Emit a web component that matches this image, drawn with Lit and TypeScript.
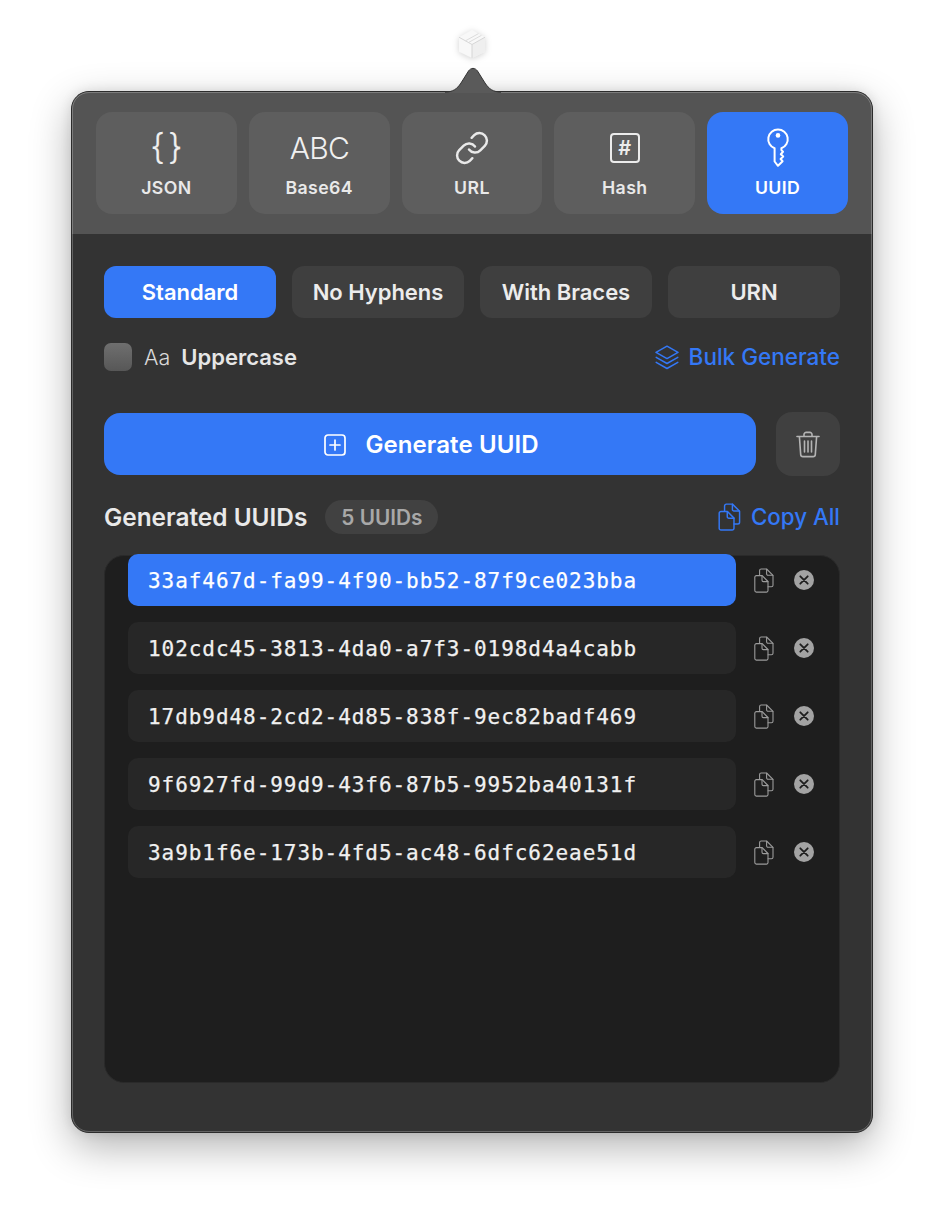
import { LitElement, html, css, svg } from "lit";
import { customElement } from "lit/decorators.js";

const docs = svg`
  <path d="M2.4 7.600h5.800l5.800 5.900v9a1.600 1.600 0 0 1-1.600 1.600H2.400A1.600 1.600 0 0 1 .8 22.500V9.200a1.600 1.600 0 0 1 1.600-1.600z"/>
  <path d="M8 7.800v4.400a1.400 1.400 0 0 0 1.400 1.400H14"/>
  <path d="M5.600 7.400V2.600A1.600 1.600 0 0 1 7.200 1h5.400l6.400 6.300v9.900a1.600 1.600 0 0 1-1.600 1.600h-3.300"/>
  <path d="M12.600 1.200v4.600A1.400 1.400 0 0 0 14 7.200h4.800"/>`;

const tabIcons: Record<string, unknown> = {
  JSON: html`<span class="glyph braces">{}</span>`,
  Base64: html`<span class="glyph abc">ABC</span>`,
  URL: html`<svg class="ic" width="36" height="36" viewBox="0 0 24 24" stroke-width="1.650"><path d="M10 13a5 5 0 0 0 7.540.54l3-3a5 5 0 0 0-7.070-7.070l-1.720 1.710"/><path d="M14 11a5 5 0 0 0-7.540-.54l-3 3a5 5 0 0 0 7.070 7.070l1.710-1.710"/></svg>`,
  Hash: html`<span class="hashbox">#</span>`,
  UUID: html`<svg class="ic" width="24" height="40" viewBox="0 0 24 40" stroke-width="2"><path d="M12 1.500a9.700 9.700 0 0 0-3.400 18.800v13.200L12 37.800l4.600-4.600-2-2.200 2.600-2.500-2.400-2.300 2.200-2.400-1.600-1.700v-1.800A9.700 9.700 0 0 0 12 1.500z"/><circle cx="12" cy="7.400" r="2.300" fill="currentColor" stroke="none"/></svg>`,
};

const tabs = ["JSON", "Base64", "URL", "Hash", "UUID"];
const formats = ["Standard", "No Hyphens", "With Braces", "URN"];
const uuids = [
  "33af467d-fa99-4f90-bb52-87f9ce023bba",
  "102cdc45-3813-4da0-a7f3-0198d4a4cabb",
  "17db9d48-2cd2-4d85-838f-9ec82badf469",
  "9f6927fd-99d9-43f6-87b5-9952ba40131f",
  "3a9b1f6e-173b-4fd5-ac48-6dfc62eae51d",
];

@customElement("app-root")
export class AppRoot extends LitElement {
  static styles = css`
    :host {
      display: block;
      height: 1212px;
      background: #fff;
      font-family: Inter, "Liberation Sans", sans-serif;
      color: #e9e9e9;
      overflow: hidden;
    }
    * { box-sizing: border-box; }
    .ic { fill: none; stroke: currentColor; stroke-linecap: round; stroke-linejoin: round; display: block; }
    .top { display: flex; justify-content: center; padding-top: 29px; height: 91px; }
    .cube { filter: drop-shadow(0 1px 3px rgba(0,0,0,.18)); display: block; }
    .window {
      position: relative;
      width: 802px;
      margin: 0 auto;
      border: 1px solid #2c2c2c;
      border-radius: 18px;
      background: #333;
      box-shadow: 0 14px 40px rgba(0,0,0,.3), 0 0 12px rgba(0,0,0,.1);
    }
    .window::after {
      content: "";
      position: absolute;
      inset: 0;
      border: 1px solid rgba(255,255,255,.24);
      border-radius: 17px;
      pointer-events: none;
    }
    .arrow { position: absolute; left: 373px; top: -25px; display: block; z-index: 2; }
    .header {
      display: grid;
      grid-template-columns: repeat(5, 1fr);
      gap: 12px;
      padding: 20px 24px;
      background: #545454;
      border-radius: 17px 17px 0 0;
    }
    .tab {
      height: 102px;
      border-radius: 16px;
      background: #5e5e5e;
      display: flex;
      flex-direction: column;
      align-items: center;
      color: #e9e9e9;
    }
    .tab.on { background: #3478f6; color: #fff; }
    .tab .icon { height: 64px; display: flex; align-items: center; justify-content: center; padding-top: 8px; }
    .tab .label { font-size: 17.700px; font-weight: 600; line-height: 20px; margin-top: 2px; letter-spacing: .4px; }
    .glyph { line-height: 1; color: #f0f0f0; }
    .braces { font-size: 35px; font-weight: 300; letter-spacing: 3px; margin-top: -3px; margin-right: -3px; -webkit-text-stroke: .2px #f0f0f0; }
    .abc { font-size: 30px; font-weight: 300; letter-spacing: -.7px; margin-right: -.7px; }
    .hashbox {
      width: 30px; height: 30px;
      border: 2px solid #ececec;
      border-radius: 4px;
      display: flex; align-items: center; justify-content: center;
      font-size: 20px; font-weight: 600; color: #ececec; line-height: 1;
    }
    .body { padding: 32px 32px 49px; }
    .segs { display: grid; grid-template-columns: repeat(4, 1fr); gap: 16px; }
    .seg {
      height: 52px; border-radius: 12px; background: #3f3f3f;
      display: flex; align-items: center; justify-content: center;
      font-size: 22px; font-weight: 600; color: #ececec; letter-spacing: -.02px;
    }
    .seg.on { background: #3478f6; color: #fff; }
    .opts { display: flex; align-items: center; justify-content: space-between; margin-top: 25px; height: 28px; }
    .check { display: flex; align-items: center; }
    .box { width: 28px; height: 28px; border-radius: 7px; background: linear-gradient(#6f6f6f, #575757); }
    .aa { font-size: 21.500px; font-weight: 300; color: #d8d8d8; margin-left: 12px; }
    .upper { font-size: 22px; font-weight: 600; margin-left: 11px; color: #e6e6e6; }
    .link { display: flex; align-items: center; gap: 10px; color: #3478f6; font-size: 22.500px; font-weight: 500; line-height: 28px; }
    .actions { display: flex; align-items: center; gap: 20px; margin-top: 41px; }
    .gen {
      flex: 1; height: 62px; border-radius: 16px; background: #3478f6; color: #fff;
      display: flex; align-items: center; justify-content: center; gap: 19px;
      font-size: 24px; font-weight: 600; letter-spacing: .1px; padding-top: 1px;
    }
    .gen .ic { margin-left: 3px; }
    .trash {
      width: 64px; height: 64px; border-radius: 16px; background: #404040; color: #b4b4b4;
      display: flex; align-items: center; justify-content: center;
    }
    .head { display: flex; align-items: center; justify-content: space-between; margin-top: 24px; height: 34px; }
    .title { display: flex; align-items: center; gap: 18px; font-size: 24.400px; font-weight: 600; color: #e9e9e9; }
    .pill {
      height: 34px; padding: 0 16px; border-radius: 17px; background: #414141; color: #a8a8a8;
      display: flex; align-items: center; font-size: 20.800px; font-weight: 600;
    }
    .copyall { font-size: 22.300px; margin-top: -1px; }
    .list {
      margin-top: 21px; height: 528px; border-radius: 20px; background: #1e1e1e;
      padding: 0 24px;
      border: 1px solid #2a2a2a;
    }
    .rows { display: flex; flex-direction: column; gap: 16px; margin-top: -2px; }
    .row { display: flex; align-items: center; }
    .uuid {
      width: 608px; height: 52px; margin-left: -1px; border-radius: 10px; background: #272727; color: #f0f0f0;
      display: flex; align-items: center; padding: 2px 0 0 20px;
      font-family: "DejaVu Sans Mono", monospace; font-size: 21px; letter-spacing: .94px;
      -webkit-text-stroke: .25px currentColor;
    }
    .uuid.on { background: #3478f6; color: #fff; }
    .copy { margin-left: 18px; color: #9b9b9b; }
    .x { margin-left: 20px; }
  `;

  render() {
    return html`
      <div class="top">
        <svg class="cube" width="28" height="30" viewBox="0 0 28 30">
          <path d="M14 1l13 7.200v14.600L14 29 1 22.800V8.200z" fill="#f8f8f8"/>
          <path d="M14 15.500L27 8.200v14.600L14 29z" fill="#efefef"/>
          <path d="M14 15.500v13.500M1 8.200l13 7.300 13-7.300" fill="none" stroke="#d6d6d6" stroke-width="1"/>
          <path d="M7.500 11.800l13-7.200M10.500 13.500l13-7.200" fill="none" stroke="#dcdcdc" stroke-width="1"/>
        </svg>
      </div>
      <div class="window">
        <svg class="arrow" width="56" height="26" viewBox="0 0 56 26">
          <path d="M0 25C8 25 12 22 16 16L23.500 4C26 .5 30 .5 32.500 4L40 16C44 22 48 25 56 25V26H0z" fill="#5a5a5a"/>
          <path d="M0 25C8 25 12 22 16 16L23.500 4C26 .5 30 .5 32.500 4L40 16C44 22 48 25 56 25" fill="none" stroke="#333" stroke-width="1"/>
        </svg>
        <div class="header">
          ${tabs.map(
            (t) => html`<div class="tab ${t === "UUID" ? "on" : ""}">
              <div class="icon">${tabIcons[t]}</div>
              <div class="label">${t}</div>
            </div>`
          )}
        </div>
        <div class="body">
          <div class="segs">
            ${formats.map((f, i) => html`<div class="seg ${i === 0 ? "on" : ""}">${f}</div>`)}
          </div>
          <div class="opts">
            <div class="check">
              <div class="box"></div>
              <span class="aa">Aa</span>
              <span class="upper">Uppercase</span>
            </div>
            <div class="link">
              <svg class="ic" width="24" height="25" viewBox="0 0 24 25" stroke-width="1.500">
                <path d="M12 1.200L23 7.400 12 13.600 1 7.400z"/>
                <path d="M1.200 12.400L12 18.500 22.800 12.400"/>
                <path d="M1.200 17.400L12 23.500 22.800 17.400"/>
              </svg>
              Bulk Generate
            </div>
          </div>
          <div class="actions">
            <div class="gen">
              <svg class="ic" width="22" height="22" viewBox="0 0 22 22" stroke-width="1.700">
                <rect x="1" y="1" width="20" height="20" rx="3"/>
                <path d="M11 6v10M6 11h10"/>
              </svg>
              Generate UUID
            </div>
            <div class="trash">
              <svg class="ic" width="24" height="27" viewBox="0 0 24 27" stroke-width="1.600">
                <path d="M1 5.500h22"/>
                <path d="M8 5.300V3.600A2.200 2.200 0 0 1 10.200 1.400h3.600A2.200 2.200 0 0 1 16 3.600v1.700"/>
                <path d="M3.400 5.800l1.300 17.800A2.200 2.200 0 0 0 6.900 25.600h10.200a2.200 2.200 0 0 0 2.200-2L20.600 5.800"/>
                <path d="M8.500 10v11M12 10v11M15.500 10v11"/>
              </svg>
            </div>
          </div>
          <div class="head">
            <div class="title">
              Generated UUIDs
              <span class="pill">5 UUIDs</span>
            </div>
            <div class="link copyall">
              <svg class="ic" width="23" height="28" viewBox="0 0 20 25" stroke-width="1.300">${docs}</svg>
              Copy All
            </div>
          </div>
          <div class="list">
            <div class="rows">
              ${uuids.map(
                (u, i) => html`<div class="row">
                  <div class="uuid ${i === 0 ? "on" : ""}">${u}</div>
                  <svg class="ic copy" width="20" height="25" viewBox="0 0 20 25" stroke-width="1.100">${docs}</svg>
                  <svg class="x" width="20" height="20" viewBox="0 0 20 20">
                    <circle cx="10" cy="10" r="10" fill="#a3a3a3"/>
                    <path d="M6.300 6.300l7.400 7.400M13.700 6.300l-7.400 7.400" stroke="#1e1e1e" stroke-width="1.800" stroke-linecap="round"/>
                  </svg>
                </div>`
              )}
            </div>
          </div>
        </div>
      </div>
    `;
  }
}
